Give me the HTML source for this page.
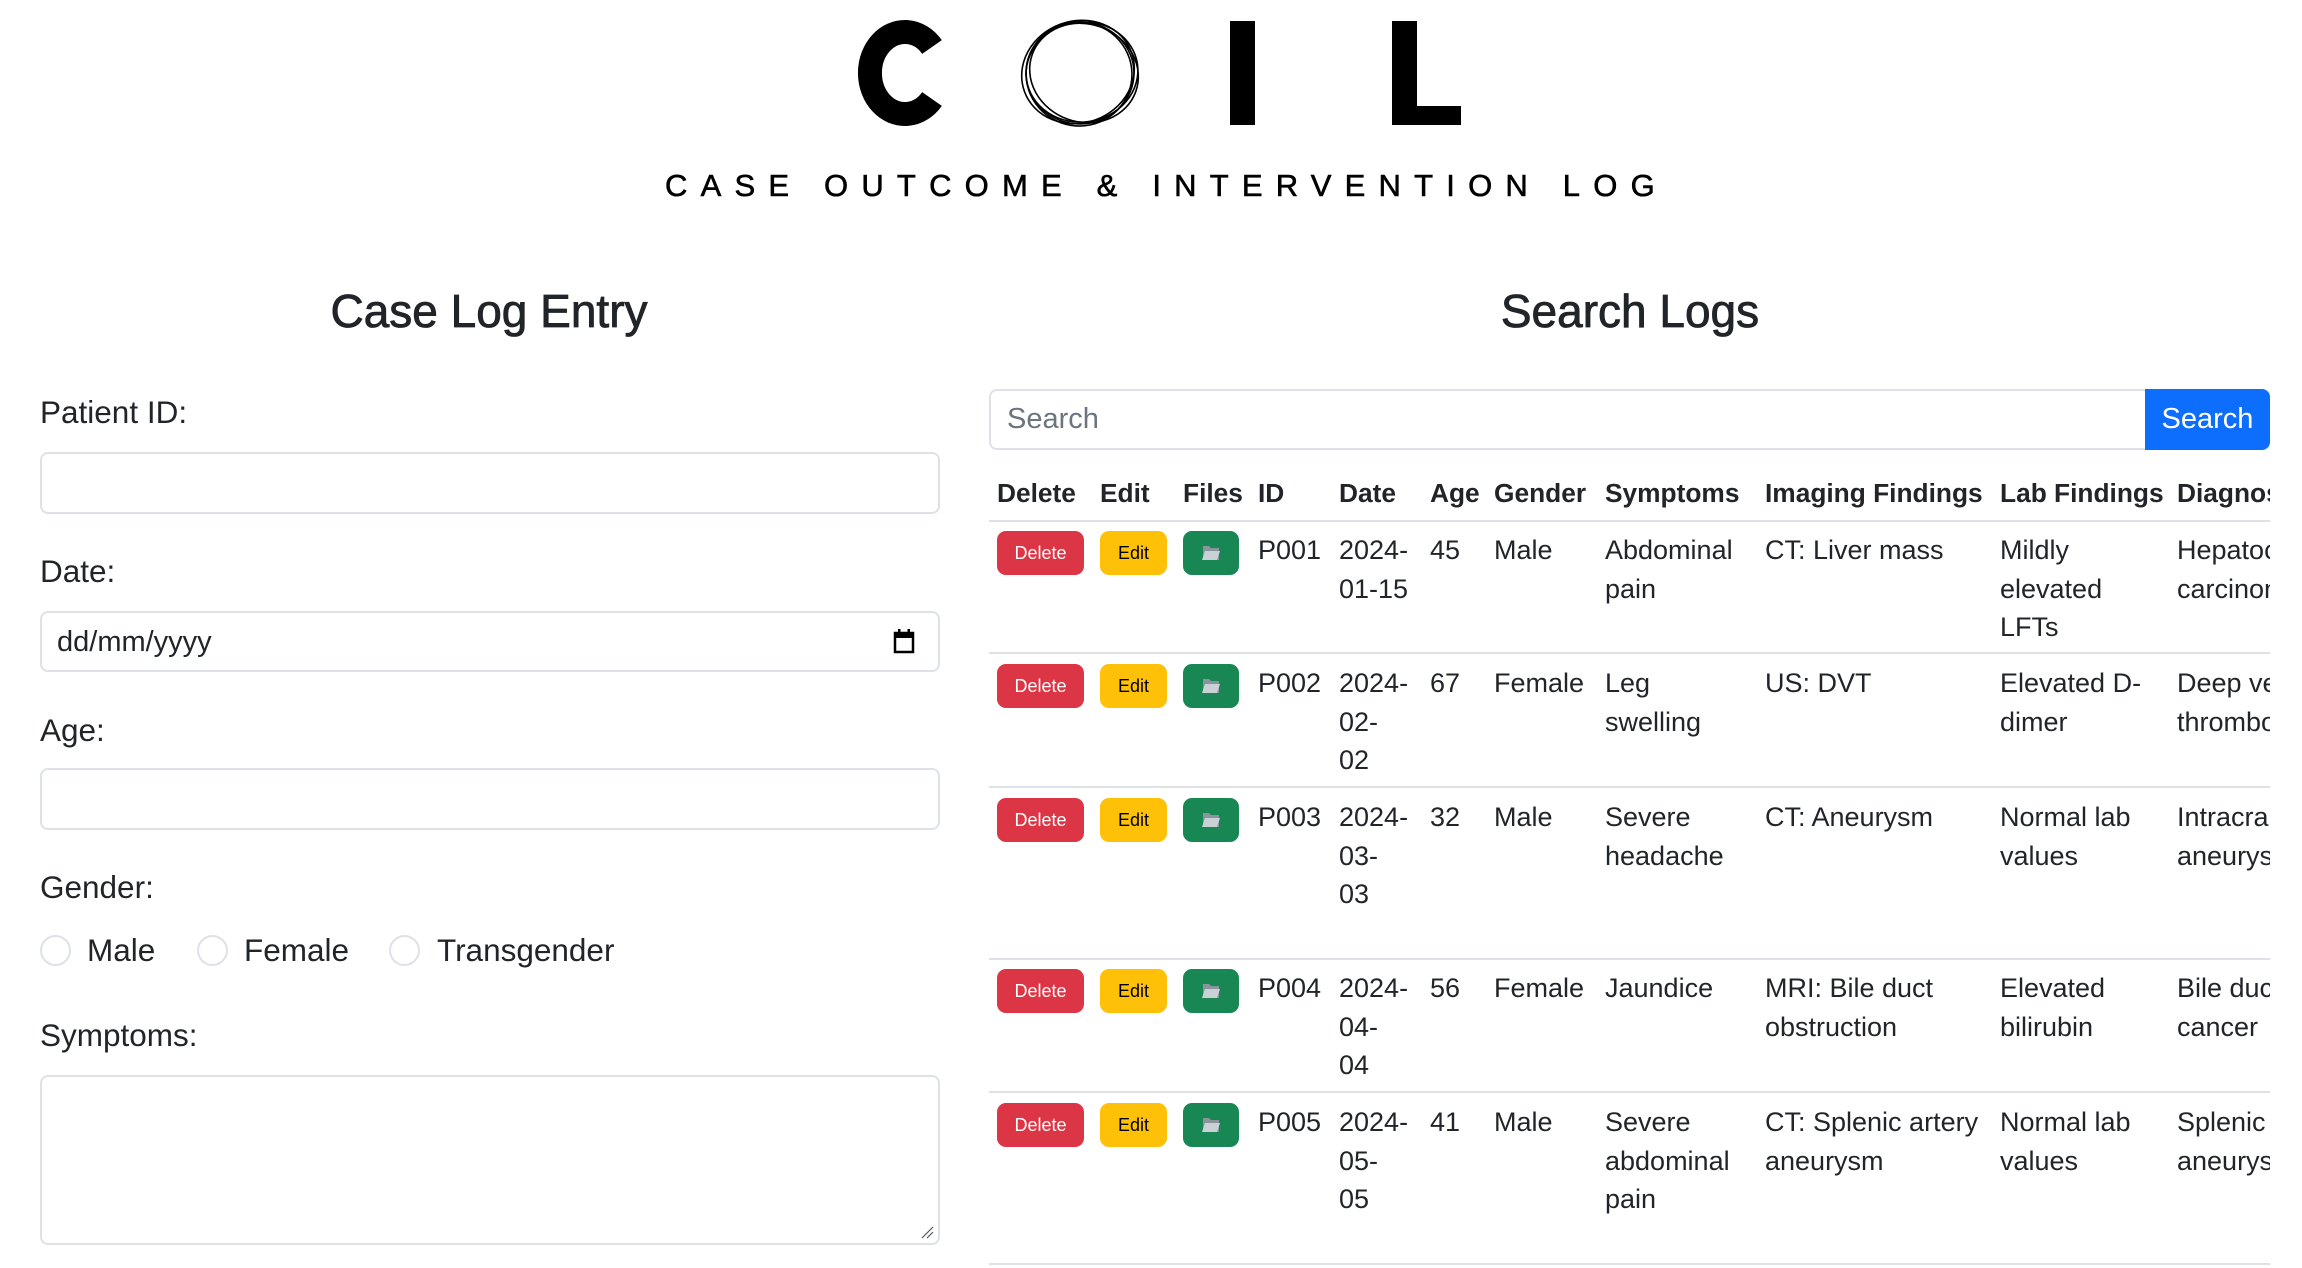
<!DOCTYPE html>
<html><head><meta charset="utf-8">
<style>
*{box-sizing:border-box;margin:0;padding:0}
body{width:2302px;height:1268px;overflow:hidden;background:#fff;font-family:"Liberation Sans",sans-serif;color:#212529;position:relative}
.a{position:absolute;white-space:nowrap}
.lbl{font-size:31.5px;line-height:36px}
.inp{position:absolute;border:2px solid #dee2e6;border-radius:8px;background:#fff}
.h2{font-size:46px;line-height:56px;transform:translateX(-50%);-webkit-text-stroke:0.8px #212529}
.radio{position:absolute;width:31px;height:31px;border:2px solid #dee2e6;border-radius:50%}
.th{font-size:26.3px;font-weight:bold;line-height:34px}
.td{font-size:27px;line-height:38.5px}
.btn{position:absolute;border-radius:9px;font-size:18px;display:flex;align-items:center;justify-content:center;height:44px}
.hr{position:absolute;left:989px;width:1281px;height:2px;background:#dee2e6}
</style></head><body>

<svg class="a" style="left:0;top:0" width="2302" height="140">
<path d="M932 47 A35 41 0 1 0 932 99" fill="none" stroke="#000" stroke-width="24"/>
<g fill="none" stroke="#000" stroke-width="1.6">
<ellipse cx="1080" cy="73" rx="54" ry="51"/>
<ellipse cx="1082" cy="72" rx="56" ry="50" transform="rotate(-8 1082 72)"/>
<ellipse cx="1079" cy="74" rx="53" ry="52" transform="rotate(10 1079 74)"/>
<ellipse cx="1084" cy="73" rx="55" ry="49" transform="rotate(20 1084 73)"/>
<ellipse cx="1078" cy="72" rx="57" ry="51" transform="rotate(-20 1078 72)"/>
</g>
<rect x="1230" y="21" width="25" height="104" fill="#000"/>
<rect x="1392" y="21" width="25" height="104" fill="#000"/>
<rect x="1392" y="106" width="69" height="19" fill="#000"/>
</svg>
<div class="a" style="left:665px;top:168px;font-size:31px;line-height:36px;letter-spacing:13.2px;color:#000;-webkit-text-stroke:0.6px #000">CASE OUTCOME &amp; INTERVENTION LOG</div>

<div class="a h2" style="left:489px;top:283px">Case Log Entry</div>
<div class="a h2" style="left:1630px;top:283px">Search Logs</div>

<div class="a lbl" style="left:40px;top:394px">Patient ID:</div>
<div class="inp" style="left:40px;top:452px;width:900px;height:62px"></div>
<div class="a lbl" style="left:40px;top:553px">Date:</div>
<div class="inp" style="left:40px;top:611px;width:900px;height:61px"></div>
<div class="a" style="left:57px;top:624px;font-size:29px;line-height:36px">dd/mm/yyyy</div>
<svg class="a" style="left:893px;top:628px" width="22" height="26"><rect x="2" y="5" width="18" height="19" fill="none" stroke="#000" stroke-width="2.5"/><rect x="2" y="5" width="18" height="5" fill="#000"/><rect x="5" y="1" width="2.5" height="5" fill="#000"/><rect x="14.5" y="1" width="2.5" height="5" fill="#000"/></svg>
<div class="a lbl" style="left:40px;top:712px">Age:</div>
<div class="inp" style="left:40px;top:768px;width:900px;height:62px"></div>
<div class="a lbl" style="left:40px;top:869px">Gender:</div>
<div class="radio" style="left:40px;top:935px"></div>
<div class="a lbl" style="left:87px;top:932px">Male</div>
<div class="radio" style="left:197px;top:935px"></div>
<div class="a lbl" style="left:244px;top:932px">Female</div>
<div class="radio" style="left:389px;top:935px"></div>
<div class="a lbl" style="left:437px;top:932px">Transgender</div>
<div class="a lbl" style="left:40px;top:1017px">Symptoms:</div>
<div class="inp" style="left:40px;top:1075px;width:900px;height:170px"></div>
<svg class="a" style="left:920px;top:1225px" width="14" height="14"><path d="M2 13L13 2M7 13L13 7" stroke="#555" stroke-width="1.2"/></svg>

<div class="inp" style="left:989px;top:389px;width:1160px;height:61px;border-radius:8px 0 0 8px"></div>
<div class="a" style="left:1007px;top:401px;font-size:29px;line-height:36px;color:#6c757d">Search</div>
<div class="a" style="left:2145px;top:389px;width:125px;height:61px;background:#0d6efd;border-radius:0 8px 8px 0;color:#fff;font-size:29px;display:flex;align-items:center;justify-content:center">Search</div>

<div class="a" style="left:989px;top:470px;width:1281px;height:798px;overflow:hidden">
<div style="position:relative;left:-989px;top:-470px">
<div class="a th" style="left:997px;top:476px">Delete</div>
<div class="a th" style="left:1100px;top:476px">Edit</div>
<div class="a th" style="left:1183px;top:476px">Files</div>
<div class="a th" style="left:1258px;top:476px">ID</div>
<div class="a th" style="left:1339px;top:476px">Date</div>
<div class="a th" style="left:1430px;top:476px">Age</div>
<div class="a th" style="left:1494px;top:476px">Gender</div>
<div class="a th" style="left:1605px;top:476px">Symptoms</div>
<div class="a th" style="left:1765px;top:476px">Imaging Findings</div>
<div class="a th" style="left:2000px;top:476px">Lab Findings</div>
<div class="a th" style="left:2177px;top:476px">Diagnosis</div>
</div></div>

<div class="hr" style="top:520px"></div>
<div class="hr" style="top:652px"></div>
<div class="hr" style="top:786px"></div>
<div class="hr" style="top:958px"></div>
<div class="hr" style="top:1091px"></div>
<div class="hr" style="top:1263px"></div>

<div class="a" style="left:0;top:0;width:2270px;height:1268px;overflow:hidden">
<!-- row 1 -->
<div class="btn" style="left:997px;top:531px;width:87px;background:#dc3545;color:#fff">Delete</div>
<div class="btn" style="left:1100px;top:531px;width:67px;background:#ffc107;color:#000">Edit</div>
<div class="btn" style="left:1183px;top:531px;width:56px;background:#198754"><svg width="20" height="18"><path d="M2 2h6l2 2h8v12H2z" fill="#8a949c"/><path d="M4 7h15l-3 9H1z" fill="#c9d0d6"/></svg></div>
<div class="a td" style="left:1258px;top:531px">P001</div>
<div class="a td" style="left:1339px;top:531px">2024-<br>01-15</div>
<div class="a td" style="left:1430px;top:531px">45</div>
<div class="a td" style="left:1494px;top:531px">Male</div>
<div class="a td" style="left:1605px;top:531px">Abdominal<br>pain</div>
<div class="a td" style="left:1765px;top:531px">CT: Liver mass</div>
<div class="a td" style="left:2000px;top:531px">Mildly<br>elevated<br>LFTs</div>
<div class="a td" style="left:2177px;top:531px">Hepatocellular<br>carcinoma</div>
<!-- row 2 -->
<div class="btn" style="left:997px;top:664px;width:87px;background:#dc3545;color:#fff">Delete</div>
<div class="btn" style="left:1100px;top:664px;width:67px;background:#ffc107;color:#000">Edit</div>
<div class="btn" style="left:1183px;top:664px;width:56px;background:#198754"><svg width="20" height="18"><path d="M2 2h6l2 2h8v12H2z" fill="#8a949c"/><path d="M4 7h15l-3 9H1z" fill="#c9d0d6"/></svg></div>
<div class="a td" style="left:1258px;top:664px">P002</div>
<div class="a td" style="left:1339px;top:664px">2024-<br>02-<br>02</div>
<div class="a td" style="left:1430px;top:664px">67</div>
<div class="a td" style="left:1494px;top:664px">Female</div>
<div class="a td" style="left:1605px;top:664px">Leg<br>swelling</div>
<div class="a td" style="left:1765px;top:664px">US: DVT</div>
<div class="a td" style="left:2000px;top:664px">Elevated D-<br>dimer</div>
<div class="a td" style="left:2177px;top:664px">Deep vein<br>thrombosis</div>
<!-- row 3 -->
<div class="btn" style="left:997px;top:798px;width:87px;background:#dc3545;color:#fff">Delete</div>
<div class="btn" style="left:1100px;top:798px;width:67px;background:#ffc107;color:#000">Edit</div>
<div class="btn" style="left:1183px;top:798px;width:56px;background:#198754"><svg width="20" height="18"><path d="M2 2h6l2 2h8v12H2z" fill="#8a949c"/><path d="M4 7h15l-3 9H1z" fill="#c9d0d6"/></svg></div>
<div class="a td" style="left:1258px;top:798px">P003</div>
<div class="a td" style="left:1339px;top:798px">2024-<br>03-<br>03</div>
<div class="a td" style="left:1430px;top:798px">32</div>
<div class="a td" style="left:1494px;top:798px">Male</div>
<div class="a td" style="left:1605px;top:798px">Severe<br>headache</div>
<div class="a td" style="left:1765px;top:798px">CT: Aneurysm</div>
<div class="a td" style="left:2000px;top:798px">Normal lab<br>values</div>
<div class="a td" style="left:2177px;top:798px">Intracranial<br>aneurysm</div>
<!-- row 4 -->
<div class="btn" style="left:997px;top:969px;width:87px;background:#dc3545;color:#fff">Delete</div>
<div class="btn" style="left:1100px;top:969px;width:67px;background:#ffc107;color:#000">Edit</div>
<div class="btn" style="left:1183px;top:969px;width:56px;background:#198754"><svg width="20" height="18"><path d="M2 2h6l2 2h8v12H2z" fill="#8a949c"/><path d="M4 7h15l-3 9H1z" fill="#c9d0d6"/></svg></div>
<div class="a td" style="left:1258px;top:969px">P004</div>
<div class="a td" style="left:1339px;top:969px">2024-<br>04-<br>04</div>
<div class="a td" style="left:1430px;top:969px">56</div>
<div class="a td" style="left:1494px;top:969px">Female</div>
<div class="a td" style="left:1605px;top:969px">Jaundice</div>
<div class="a td" style="left:1765px;top:969px">MRI: Bile duct<br>obstruction</div>
<div class="a td" style="left:2000px;top:969px">Elevated<br>bilirubin</div>
<div class="a td" style="left:2177px;top:969px">Bile duct<br>cancer</div>
<!-- row 5 -->
<div class="btn" style="left:997px;top:1103px;width:87px;background:#dc3545;color:#fff">Delete</div>
<div class="btn" style="left:1100px;top:1103px;width:67px;background:#ffc107;color:#000">Edit</div>
<div class="btn" style="left:1183px;top:1103px;width:56px;background:#198754"><svg width="20" height="18"><path d="M2 2h6l2 2h8v12H2z" fill="#8a949c"/><path d="M4 7h15l-3 9H1z" fill="#c9d0d6"/></svg></div>
<div class="a td" style="left:1258px;top:1103px">P005</div>
<div class="a td" style="left:1339px;top:1103px">2024-<br>05-<br>05</div>
<div class="a td" style="left:1430px;top:1103px">41</div>
<div class="a td" style="left:1494px;top:1103px">Male</div>
<div class="a td" style="left:1605px;top:1103px">Severe<br>abdominal<br>pain</div>
<div class="a td" style="left:1765px;top:1103px">CT: Splenic artery<br>aneurysm</div>
<div class="a td" style="left:2000px;top:1103px">Normal lab<br>values</div>
<div class="a td" style="left:2177px;top:1103px">Splenic<br>aneurysm</div>
</div>
</body></html>
